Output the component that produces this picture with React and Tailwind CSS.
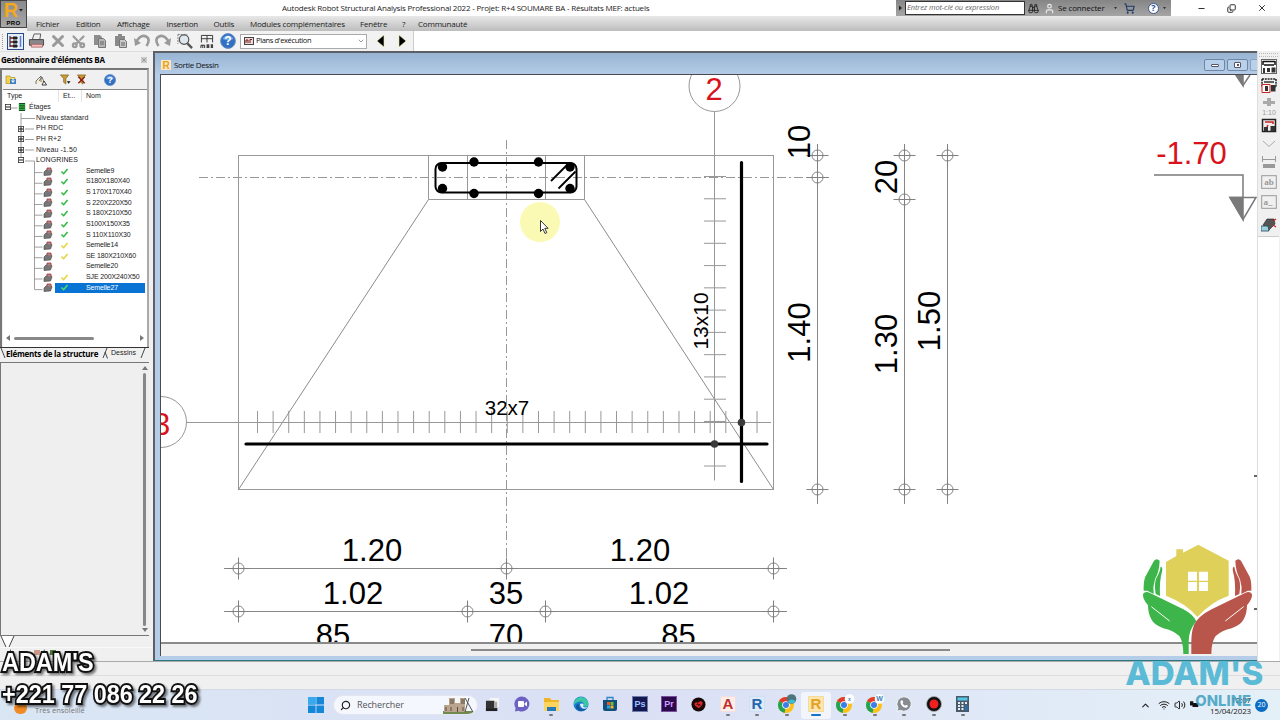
import React from 'react';
import { Scissors, Undo, Redo, X, Minus, Copy, Search, ChevronDown, ChevronUp, Wifi, Volume2, User, ShoppingCart, Binoculars } from 'lucide-react';

const menus = [
  ['Fichier', 'w-[40px]'],
  ['Edition', 'w-[41px]'],
  ['Affichage', 'w-[49.5px]'],
  ['Insertion', 'w-[47px]'],
  ['Outils', 'w-[36.5px]'],
  ['Modules complémentaires', 'w-[110px]'],
  ['Fenêtre', 'w-[42px]'],
  ['?', 'w-[16px]'],
  ['Communauté', 'w-[50px]'],
];

const branches = [
  { nom: 'Niveau standard', signe: '' },
  { nom: 'PH RDC', signe: '+' },
  { nom: 'PH R+2', signe: '+' },
  { nom: 'Niveau -1.50', signe: '+' },
  { nom: 'LONGRINES', signe: '-' },
];

const semelles = [
  { nom: 'Semelle9', etat: 'vert' },
  { nom: 'S180X180X40', etat: 'vert' },
  { nom: 'S 170X170X40', etat: 'vert' },
  { nom: 'S 220X220X50', etat: 'vert' },
  { nom: 'S 180X210X50', etat: 'vert' },
  { nom: 'S100X150X35', etat: 'vert' },
  { nom: 'S 110X110X30', etat: 'vert' },
  { nom: 'Semelle14', etat: 'jaune' },
  { nom: 'SE 180X210X60', etat: 'jaune' },
  { nom: 'Semelle20', etat: '' },
  { nom: 'SJE 200X240X50', etat: 'jaune' },
  { nom: 'Semelle27', etat: 'vert', actif: true },
];

const Aide = ({ className }) => (
  <svg viewBox="0 0 16 16" className={className}>
    <circle cx="8" cy="8" r="7.400" fill="#2f6fc4" stroke="#6b8fbf" />
    <path d="M2.500 6a6 6 0 0 1 11 0q-5.500 2.500-11 0z" fill="#6fa5e6" />
    <text x="8" y="12.300" textAnchor="middle" fontSize="12" fontWeight="bold" fill="#fff" fontFamily="Liberation Sans, sans-serif">?</text>
  </svg>
);

const LogoR = ({ className }) => (
  <svg viewBox="0 0 10 10" className={className}>
    <rect width="10" height="10" fill="#fbe8c0" />
    <text x="5" y="8.700" textAnchor="middle" fontSize="10" fontWeight="bold" fill="#e8a020" fontFamily="Liberation Sans, sans-serif">R</text>
  </svg>
);

const Entete = () => (
  <header className="flex h-[31px] shrink-0">
    <div className="flex h-[28px] w-[27px] shrink-0 flex-col items-center border border-[#444] bg-gradient-to-b from-[#8a8a8a] to-[#a8a8a8]">
      <div className="flex h-[19px] items-center">
        <span className="text-[20px] leading-[19px] font-bold text-[#f5a81c] [font-family:'Liberation_Sans',sans-serif]">R</span>
        <svg viewBox="0 0 5 3" className="ml-px w-[4px]"><path d="M0 0h5L2.500 3z" fill="#222" /></svg>
      </div>
      <span className="text-[6px] leading-[7px] font-bold tracking-[0.3px] text-black [font-family:'Liberation_Sans',sans-serif]">PRO</span>
    </div>
    <div className="flex flex-1 flex-col">
      <div className="flex h-[16px] items-center bg-white">
        <span className="ml-[255px] w-[614px] text-[8px] tracking-[-0.2px] whitespace-nowrap text-[#222]">
          Autodesk Robot Structural Analysis Professional 2022 - Projet: R+4 SOUMARE BA - Résultats MEF: actuels
        </span>
        <div className="flex h-[16px] w-[275px] items-center bg-gradient-to-b from-[#858585] to-[#a5a5a5]">
          <svg viewBox="0 0 9 8" className="w-[9px]"><path d="M3 1.500l3 2.500-3 2.500z" fill="#222" /></svg>
          <div className="flex h-[14px] w-[120px] items-center border border-[#333] bg-white pl-[1px] text-[7.5px] tracking-[-0.1px] whitespace-nowrap text-[#666] italic">Entrez mot-clé ou expression</div>
          <Binoculars className="ml-[3px] h-[11px] w-[11px] text-[#222]" strokeWidth={2} />
          <User className="ml-[5px] h-[11px] w-[11px] text-[#eee]" strokeWidth={2.500} />
          <span className="ml-[3px] w-[56px] text-[8px] tracking-[-0.15px] whitespace-nowrap text-[#111]">Se connecter</span>
          <svg viewBox="0 0 4 3" className="w-[3px]"><path d="M0 0h4L2 3z" fill="#333" /></svg>
          <ShoppingCart className="ml-[7px] h-[11px] w-[11px] text-[#223a66]" strokeWidth={2.500} />
          <div className="ml-[13px] flex h-[11px] w-[11px] items-center justify-center rounded-full border border-[#3b5b94] bg-white text-[9px] font-bold text-[#2b4f92]">?</div>
          <svg viewBox="0 0 4 3" className="ml-[4px] w-[3px]"><path d="M0 0h4L2 3z" fill="#333" /></svg>
        </div>
        <div className="flex flex-1 items-center pl-[26px] text-[#222]">
          <Minus className="h-[9px] w-[9px]" strokeWidth={2.500} />
          <Copy className="ml-[21px] h-[9px] w-[9px] -scale-x-100 rotate-180" strokeWidth={2.500} />
          <X className="ml-[21px] h-[10px] w-[10px]" strokeWidth={2.200} />
        </div>
      </div>
      <nav className="flex h-[15px] items-center bg-gradient-to-b from-[#e8e8e8] to-[#bdbdbd] pl-[9px] text-[8px] tracking-[-0.2px] text-[#222]">
        {menus.map(([nom, largeur]) => (
          <span key={nom} className={`${largeur} shrink-0 whitespace-nowrap`}>{nom}</span>
        ))}
      </nav>
    </div>
  </header>
);

const BarreOutils = () => (
  <div className="flex h-[20px] shrink-0 bg-white">
    <div className="flex w-[414px] items-center border-r border-[#ccc] bg-[#f2f2f2] pl-[2px]">
      <div className="h-[15px] w-[2px] border-l border-dotted border-[#999]" />
      <svg viewBox="0 0 17 17" className="ml-[3px] h-[17px] w-[17px]">
        <rect x="0.500" y="0.500" width="16" height="16" fill="#e4eefb" stroke="#2a4a86" />
        <path d="M3 3v11M3 5h8M3 9h8M3 13h8" stroke="#111" fill="none" />
        <path d="M6 3.500h4v3H6zM6 7.500h4v3H6zM6 11.500h4v3H6z" fill="#222" />
        <path d="M4 5h2M4 9h2M4 13h2" stroke="#d00" />
        <path d="M13.500 3v11" stroke="#5b7fd0" strokeWidth="1.500" />
      </svg>
      <svg viewBox="0 0 17 17" className="ml-[4px] h-[16px] w-[17px]">
        <path d="M4 7l2-6h7l-1 6z" fill="#eee" stroke="#555" />
        <path d="M1 7h15v6H1z" fill="#888" stroke="#444" />
        <path d="M3 12h12v3H3z" fill="#f3c0c0" stroke="#a55" strokeWidth="0.800" />
      </svg>
      <div className="ml-[4px] flex items-center text-[#9a9a9a]">
        <X className="h-[18px] w-[18px]" strokeWidth={4} />
        <Scissors className="ml-[4px] h-[15px] w-[15px] -rotate-90" strokeWidth={3.500} />
        <svg viewBox="0 0 14 14" className="ml-[7px] h-[14px] w-[14px]">
          <path d="M1 1h6l2 2v8H1z" fill="#8e8e8e" />
          <path d="M5.500 4.500h5l2 2v7h-7z" fill="#b5b5b5" stroke="#777" />
          <path d="M7 8h4M7 10h4" stroke="#666" />
        </svg>
        <svg viewBox="0 0 14 14" className="ml-[7px] h-[14px] w-[14px]">
          <path d="M1 2h10v10H1zM4 0h4v3H4z" fill="#8a8a8a" />
          <path d="M5.500 5.500h5l2 2v6h-7z" fill="#c8c8c8" stroke="#777" />
          <path d="M7 9h4M7 11h4" stroke="#666" />
        </svg>
        <svg viewBox="0 0 16 16" className="ml-[6px] h-[16px] w-[16px]">
          <path d="M2 9Q7 1 12 3.500T12.500 13" fill="none" stroke="#9a9a9a" strokeWidth="2.600" />
          <path d="M0 5l1 8 6-3z" fill="#9a9a9a" />
        </svg>
        <svg viewBox="0 0 16 16" className="ml-[5px] h-[16px] w-[16px] -scale-x-100">
          <path d="M2 9Q7 1 12 3.500T12.500 13" fill="none" stroke="#9a9a9a" strokeWidth="2.600" />
          <path d="M0 5l1 8 6-3z" fill="#9a9a9a" />
        </svg>
      </div>
      <svg viewBox="0 0 17 17" className="ml-[6px] h-[16px] w-[16px]">
        <path d="M1 1.500h10M1 1.500v10" stroke="#777" strokeDasharray="2 1" />
        <circle cx="7.500" cy="7" r="5" fill="#dfe8ef" stroke="#555" strokeWidth="1.300" />
        <path d="M11 11l5 5" stroke="#555" strokeWidth="2.500" />
      </svg>
      <svg viewBox="0 0 15 16" className="ml-[7px] h-[15px] w-[14px]">
        <path d="M1.500 9V1.500h12V9M1.500 5h12M7.500 1.500V9" stroke="#333" fill="none" />
        <path d="M1 15v-3h4v3M3 12v3" stroke="#222" fill="none" />
        <path d="M7 11h3v4H7zM11.500 11H14v4h-2.500z" fill="#444" />
      </svg>
      <Aide className="ml-[6px] h-[16px] w-[16px]" />
      <div className="ml-[4px] flex h-[15px] w-[127px] items-center border border-[#aaa] bg-white pl-[3px]">
        <svg viewBox="0 0 10 8" className="h-[8px] w-[10px]">
          <rect x="0.500" y="0.500" width="9" height="7" fill="#eed8d8" stroke="#444" />
          <path d="M2 6V3h2v3M6 6V2.500h2" stroke="#7a1a1a" fill="none" />
        </svg>
        <span className="ml-[2px] flex-1 text-[7.5px] tracking-[-0.35px] whitespace-nowrap text-[#111]">Plans d'exécution</span>
        <ChevronDown className="mr-[1px] h-[8px] w-[8px] text-[#666]" />
      </div>
      <svg viewBox="0 0 30 12" className="ml-[10px] h-[12px] w-[30px]">
        <path d="M7 0v12L0 6z" fill="#000" stroke="#e8ef9a" strokeWidth="0.600" />
        <path d="M22 0l7 6-7 6z" fill="#000" stroke="#e8ef9a" strokeWidth="0.600" />
      </svg>
    </div>
  </div>
);

const Coche = ({ etat, actif }) => (
  <svg viewBox="0 0 9 8" className="h-[7px] w-[9px]">
    {etat && <path d="M1 4l2.500 2.500L8 1.200" fill="none" stroke={etat === 'jaune' ? '#e3d43c' : actif ? '#4be06a' : '#2dbb40'} strokeWidth="1.800" />}
  </svg>
);

const IconeSemelle = () => (
  <svg viewBox="0 0 10 9" className="h-[9px] w-[10px]">
    <path d="M1 5l2-2 5-.5 1 1.500-1.500 4L1 8.500z" fill="#777" stroke="#444" strokeWidth="0.600" />
    <path d="M4 3V1h4v3" fill="#a88" stroke="#a33" strokeWidth="0.800" />
  </svg>
);

const Arbre = () => (
  <div className="relative mr-[2px] -ml-[3px] h-[230px] shrink-0 text-[7px] leading-[10.64px] text-[#222] [font-family:'Liberation_Sans',sans-serif]">
    <svg viewBox="0 0 146 230" className="absolute top-0 left-0 h-[230px] w-[146px]">
      <path d="M9.500 6h8M21 11v49M21 16.500h14M25 27h9M25 37.500h9M25 48h9M25 59h9.500M34.500 59v128.500" stroke="#888" fill="none" strokeWidth="0.800" />
      {semelles.map((s, i) => (
        <path key={s.nom} d={`M34.500 ${70.600 + i * 10.640}h8`} stroke="#888" strokeWidth="0.800" />
      ))}
    </svg>
    <div className="relative">
      <div className="flex h-[10.64px] items-center">
        <svg viewBox="0 0 6 6" className="ml-[5px] h-[6px] w-[6px]">
          <rect x="0.400" y="0.400" width="5.200" height="5.200" fill="#fff" stroke="#333" strokeWidth="0.800" />
          <path d="M1 3h4" stroke="#000" strokeWidth="0.900" />
        </svg>
        <svg viewBox="0 0 9 9" className="ml-[7px] h-[8px] w-[8px]">
          <path d="M1 0h7v9H1z" fill="#164a20" />
          <path d="M1 2h7M1 4.500h7M1 7h7" stroke="#3fd24d" strokeWidth="1.200" />
        </svg>
        <span className="ml-[3px]">Étages</span>
      </div>
      {branches.map((b) => (
        <div key={b.nom} className="flex h-[10.64px] items-center">
          <span className="ml-[18px] flex w-[18px]">
            {b.signe && (
              <svg viewBox="0 0 6 6" className="h-[6px] w-[6px]">
                <rect x="0.400" y="0.400" width="5.200" height="5.200" fill="#fff" stroke="#333" strokeWidth="0.800" />
                <path d={b.signe === '+' ? 'M1 3h4M3 1v4' : 'M1 3h4'} stroke="#000" strokeWidth="0.900" />
              </svg>
            )}
          </span>
          <span className="tracking-[0.1px] whitespace-nowrap">{b.nom}</span>
        </div>
      ))}
      {semelles.map((s) => (
        <div key={s.nom} className="flex h-[10.64px] items-center">
          <span className="ml-[43px] w-[12px]"><IconeSemelle /></span>
          <span className={`flex h-full flex-1 items-center pl-[5px] ${s.actif ? 'bg-[#0a74d4] text-white' : ''}`}>
            <Coche etat={s.etat} actif={s.actif} />
            <span className="ml-[17px] tracking-[-0.13px] whitespace-nowrap">{s.nom}</span>
          </span>
        </div>
      ))}
    </div>
  </div>
);

const Gestionnaire = () => (
  <aside className="flex w-[153px] shrink-0 flex-col bg-[#f0f0f0]">
    <div className="flex h-[17px] items-center border-t border-[#ddd] pl-px">
      <span className="w-[140px] text-[8px] font-bold tracking-[-0.28px] whitespace-nowrap text-black">Gestionnaire d'éléments BA</span>
      <span className="flex h-[6px] w-[6px] items-center justify-center bg-[#ccc]"><X className="h-[6px] w-[6px] text-[#666]" /></span>
    </div>
    <div className="flex h-[279px] w-[149px] flex-col border-x-2 border-t-2 border-[#777] border-r-[#aaa] pl-px">
      <div className="flex h-[19px] shrink-0 items-center bg-[#f0f0f0] pl-[2px]">
        <svg viewBox="0 0 12 11" className="h-[11px] w-[12px]">
          <path d="M1 2h4l1 1.500h4v6H1z" fill="#f3d24a" stroke="#9c8420" strokeWidth="0.600" />
          <path d="M5 5h6v5H5z" fill="#3e7fc4" />
          <path d="M8 4v4M6.500 6.500L8 8.500l1.500-2" stroke="#fff" fill="none" />
        </svg>
        <svg viewBox="0 0 12 12" className="ml-[18px] h-[12px] w-[12px]">
          <path d="M1 10V7l5-5v6M4 7l3-4 2 5" fill="#f5efd0" stroke="#555" strokeWidth="0.800" />
          <path d="M7 11l2-4 2.500 4z" fill="#fff" stroke="#111" strokeWidth="0.800" />
        </svg>
        <svg viewBox="0 0 12 12" className="ml-[12px] h-[11px] w-[12px]">
          <path d="M1 1h9L7 5v6L4.500 9V5z" fill="#c79b33" stroke="#7c5a16" strokeWidth="0.700" />
          <path d="M8 8h4l-2 2.500z" fill="#111" />
        </svg>
        <svg viewBox="0 0 12 12" className="ml-[5px] h-[11px] w-[12px]">
          <path d="M1 1h9L7 5v6L4.500 9V5z" fill="#c79b33" stroke="#7c5a16" strokeWidth="0.700" />
          <path d="M2 3l7 7M9 3l-7 7" stroke="#8f1d14" strokeWidth="1.500" />
        </svg>
        <Aide className="ml-[16px] h-[12px] w-[12px]" />
      </div>
      <div className="flex h-[13px] shrink-0 items-center border-t border-[#888] bg-white text-[7px] text-[#222] [font-family:'Liberation_Sans',sans-serif]">
        <span className="ml-[4px] w-[51px]">Type</span>
        <span className="flex h-full w-[23px] items-center border-l border-[#e2e2e2] pl-[4px]">Et...</span>
        <span className="flex h-full items-center border-l border-[#e2e2e2] pl-[4px]">Nom</span>
      </div>
      <div className="flex flex-1 flex-col justify-between bg-white pb-[4px]">
        <Arbre />
        <div className="flex h-[10px] items-center px-[3px]">
          <svg viewBox="0 0 4 6" className="h-[6px] w-[4px]"><path d="M4 0v6L0 3z" fill="#777" /></svg>
          <div className="ml-[4px] h-[3px] w-[80px] rounded-full bg-[#888]" />
          <svg viewBox="0 0 4 6" className="ml-auto h-[6px] w-[4px]"><path d="M0 0v6l4-3z" fill="#777" /></svg>
        </div>
      </div>
    </div>
    <div className="flex h-[12px] w-[149px] items-center border-t border-[#333] whitespace-nowrap">
      <svg viewBox="0 0 6 11" className="h-[11px] w-[6px]"><path d="M1 0l4 10" stroke="#333" fill="none" strokeWidth="0.900" /></svg>
      <span className="w-[96px] text-[8px] font-bold tracking-[-0.23px] text-black">Eléments de la structure</span>
      <svg viewBox="0 0 6 11" className="h-[11px] w-[6px]"><path d="M5 0L1 10M3 4l2.500 6.500" stroke="#333" fill="none" strokeWidth="0.900" /></svg>
      <span className="ml-[3px] text-[7px] text-[#222] [font-family:'Liberation_Sans',sans-serif]">Dessins</span>
      <svg viewBox="0 0 6 11" className="ml-[4px] h-[11px] w-[6px]"><path d="M5 0L1 10" stroke="#333" fill="none" strokeWidth="0.900" /></svg>
    </div>
    <div className="mt-[3px] flex h-[274px] w-[149px] justify-end border-y border-l border-[#777] bg-[#efefef]">
      <div className="flex w-[9px] flex-col items-center justify-between py-[3px]">
        <svg viewBox="0 0 6 4" className="w-[6px]"><path d="M0 4h6L3 0z" fill="#777" /></svg>
        <div className="h-[253px] w-[3px] rounded-full bg-[#888]" />
        <svg viewBox="0 0 6 4" className="w-[6px]"><path d="M0 0h6L3 4z" fill="#777" /></svg>
      </div>
    </div>
    <svg viewBox="0 0 153 25" className="h-[25px] w-[153px]">
      <path d="M1 0l5 11h3l5-11z" fill="#fff" />
      <path d="M1 0l5 11M9 11l5-11" fill="none" stroke="#333" strokeWidth="0.900" />
      <path d="M0 11.500h152" stroke="#fafafa" />
      <path d="M34 14h6v5h-6z" fill="#c98" />
      <path d="M50 14h6v5h-6z" fill="#4c7a3c" />
    </svg>
  </aside>
);

// Repère de cote : croix et cercle
const Repere = ({ x, y }) => (
  <g>
    <circle cx={x} cy={y} r="5.500" />
    <path d={`M${x - 11} ${y}h22M${x} ${y - 11}v22`} />
  </g>
);

const barres = [[442.500, 167], [442.500, 188.500], [474, 162], [538.500, 162], [570, 167], [570, 188.500], [474, 193.500], [538.500, 193.500]];
const cotesH = [[372, 560.500, '1.20'], [640, 560.500, '1.20'], [353, 603.500, '1.02'], [506, 603.500, '35'], [659, 603.500, '1.02'], [333, 646, '85'], [506, 646, '70'], [678.500, 646, '85']];
const cotesV = [[810, 142, '10'], [810, 332.500, '1.40'], [897, 177, '20'], [897, 344, '1.30'], [940, 321, '1.50']];

const Plan = () => (
  <svg viewBox="161 75 1096 567" className="h-[567px] w-[1096px] bg-white [font-family:'Liberation_Sans',sans-serif]">
    <circle cx="540" cy="222" r="20" fill="#fbfab4" />
    <g fill="none" stroke="#989898" strokeWidth="1">
      <rect x="238.500" y="155.500" width="535" height="334" />
      <path d="M428.500 155v44.500h156V155M467.500 155v44M545.500 155v44" />
      <path d="M428.500 199.500L238.500 489.500M584.500 199.500L773.500 489.500" stroke="#8c8c8c" />
      <path d="M199 177.500h630M506.500 140v428" strokeDasharray="9 3 2 3" />
      <circle cx="714.500" cy="86" r="25.500" />
      <circle cx="161" cy="422" r="25.500" />
      <path d="M714.500 111.500v369M186.500 422.500H771" />
      {Array.from({ length: 33 }, (_, i) => (
        <path key={i} d={`M${257.500 + i * 15.610} 411v22`} />
      ))}
      {Array.from({ length: 14 }, (_, i) => (
        <path key={i} d={`M704 ${176.500 + i * 22.270}h22`} />
      ))}
      <path d="M817.500 144v360M904.500 144v360M947.500 144v360M224 568.500h563M224 611.500h563" stroke="#888" />
      <g stroke="#808080">
        {[155.500, 177.500, 489.500].map((y) => <Repere key={y} x={817.500} y={y} />)}
        {[155.500, 199.500, 489.500].map((y) => <Repere key={y} x={904.500} y={y} />)}
        {[155.500, 489.500].map((y) => <Repere key={y} x={947.500} y={y} />)}
        {[238.500, 506.500, 773.500].map((x) => <Repere key={x} x={x} y={568.500} />)}
        {[238.500, 467.500, 545.500, 773.500].map((x) => <Repere key={x} x={x} y={611.500} />)}
      </g>
    </g>
    <g fill="none" stroke="#000">
      <rect x="435.500" y="163" width="141" height="29.500" rx="6" strokeWidth="2" />
      <path d="M551 181l17-17M558.500 188.500l17-17" strokeWidth="1.800" />
      <path d="M741.500 162.500v319M246 444h521" strokeWidth="3.200" strokeLinecap="round" />
    </g>
    {barres.map(([x, y]) => <circle key={`${x}-${y}`} cx={x} cy={y} r="4.700" />)}
    <circle cx="741.500" cy="422.500" r="3.800" fill="#3a3a3a" />
    <circle cx="714.500" cy="444" r="3.800" fill="#3a3a3a" />
    <g fontSize="31" textAnchor="middle" fill="#000">
      {cotesH.map(([x, y, t]) => <text key={`${x}-${y}`} x={x} y={y}>{t}</text>)}
      {cotesV.map(([x, y, t]) => <text key={`${x}-${y}`} transform={`translate(${x} ${y}) rotate(-90)`}>{t}</text>)}
      <text x="507" y="415" fontSize="20.500">32x7</text>
      <text transform="translate(707.500 321) rotate(-90)" fontSize="21">13x10</text>
    </g>
    <g fontSize="31" textAnchor="middle" fill="#d8131b">
      <text x="714" y="99.500">2</text>
      <text x="161.500" y="435">3</text>
      <text x="1191.500" y="163.500">-1.70</text>
    </g>
    <g stroke="#7a7a7a" fill="none" strokeWidth="1.500">
      <path d="M1154 175h89v22M1230 197.500h26l-13 22z" />
      <path d="M1230 197.500h13v22z" fill="#7a7a7a" />
      <path d="M1236 75l7 10.500L1250 75" />
      <path d="M1236 75l7 10.500V75z" fill="#7a7a7a" />
      <path d="M1254 476h3M1254 609h3" stroke="#333" />
    </g>
    <path d="M540.500 220.500v11l2.500-2.500 2 4.500 1.800-.9-2-4.300h3.300z" fill="#fff" stroke="#222" strokeWidth="0.900" />
  </svg>
);

const FenetreDessin = () => (
  <section className="flex w-[1104px] shrink-0 flex-col border-t-2 border-b border-l-2 border-[#5c6066] border-b-[#2a7a86] bg-[#b5cde8]">
    <div className="flex h-[21px] shrink-0 items-center bg-gradient-to-b from-[#98b4d3] to-[#b3cbe6] pt-[3px] pl-[6px]">
      <LogoR className="h-[10px] w-[10px]" />
      <span className="ml-[3px] flex-1 text-[8px] leading-[12px] tracking-[-0.32px] text-[#111]">Sortie Dessin</span>
      <div className="flex h-[12px] w-[21px] items-center justify-center rounded-[2px] border border-[#6f87a6] bg-[#b9d0ea]">
        <i className="h-[3px] w-[8px] rounded-[1px] border border-[#556] bg-white" />
      </div>
      <div className="ml-[2px] flex h-[12px] w-[21px] items-center justify-center rounded-[2px] border border-[#6f87a6] bg-[#b9d0ea]">
        <i className="flex h-[6px] w-[7px] items-center justify-center rounded-[1px] border border-[#556] bg-white"><b className="h-[2px] w-[2px] bg-[#556]" /></i>
      </div>
      <div className="ml-[2px] h-[12px] w-[7px] rounded-l-[2px] border border-r-0 border-[#8aa2c0] bg-[#b9d0ea]" />
    </div>
    <div className="ml-[5px] flex h-[582px] flex-col border-t border-l border-[#4a4a52] bg-[#f0f0f0]">
      <Plan />
      <div className="h-[2px] bg-[#8a8a8a]" />
      <div className="flex-1 pt-[5px]">
        <div className="ml-[310px] h-[1.5px] w-[479px] bg-[#8a8a8a]" />
      </div>
    </div>
  </section>
);

const OutilsDroite = () => (
  <aside className="flex w-[22px] flex-col border-l border-[#ddd] bg-white">
    <div className="flex h-[186px] flex-col items-center border-b border-[#ccc] bg-[#f0f0f0]">
      <div className="mt-[2px] h-[4px] w-[19px] border-y border-dotted border-[#bbb]" />
      <svg viewBox="0 0 16 176" className="h-[176px] w-[16px]">
        <rect x="0.500" y="2.500" width="15" height="14" fill="#fff" stroke="#666" />
        <path d="M2 4.500h12M2 4v4M14 4v4M3 8h10" stroke="#111" strokeWidth="1.500" fill="none" />
        <path d="M2 11h2v5H2zM6 11h3v4H6zM10.500 10.500h4v5h-4z" fill="#333" />
        <path d="M1 22h14v8H1z" fill="none" stroke="#222" strokeWidth="1.500" strokeDasharray="2 0.800" />
        <path d="M3 25h10" stroke="#333" strokeWidth="1.500" />
        <path d="M1 27.500h8v8H1z" fill="#fff" stroke="#d02020" />
        <path d="M4 29h3v5H4zM10 28h4.500v6.500H10z" fill="#333" />
        <path d="M2 44h12v3H2zM6 41h4v8H6z" fill="#aaa" />
        <text x="8" y="58" textAnchor="middle" fontSize="7" fill="#999" fontFamily="Liberation Sans, sans-serif">1:10</text>
        <path d="M1.500 62.500h13v12h-13z" fill="#eee" stroke="#222" strokeWidth="1.500" />
        <path d="M4 65h8v2M7 68l-3 6" stroke="#d02020" fill="none" strokeWidth="1.500" />
        <path d="M3 70h4v4H3zM9.500 69h4.500v5H9.500z" fill="#333" />
        <path d="M2 84l6 5.500 6-5.500" stroke="#aaa" fill="none" />
        <path d="M1 102.500h14M1.500 99v6M14.500 99v6" stroke="#999" />
        <path d="M2 107h12v4H2z" fill="#999" />
        <rect x="0.700" y="118.700" width="14.600" height="12.600" fill="none" stroke="#999" />
        <text x="8" y="128" textAnchor="middle" fontSize="9" fontWeight="bold" fill="#999" fontFamily="Liberation Serif, serif">ab</text>
        <rect x="0.700" y="138.700" width="14.600" height="12.600" fill="none" stroke="#999" />
        <text x="7" y="148" textAnchor="middle" fontSize="9" fontWeight="bold" fill="#999" fontFamily="Liberation Serif, serif">a_</text>
        <path d="M2 168l4-6h7l1 5-6 6z" fill="#555" stroke="#222" strokeWidth="0.600" />
        <path d="M0 169h7l1 5H0z" fill="#9fd0e0" stroke="#245" strokeWidth="0.800" />
        <path d="M12 164l3-2M12 168l3 2" stroke="#d02020" strokeWidth="1.200" />
      </svg>
    </div>
  </aside>
);

const Chrome = ({ badge }) => (
  <svg viewBox="0 0 20 20" className="h-[20px] w-[20px]">
    <circle cx="9" cy="11" r="8" fill="#fbc116" />
    <path d="M9 11L2.100 7a8 8 0 0 1 13.800 0z" fill="#e33b2e" />
    <path d="M9 11L2.100 7a8 8 0 0 0 5.500 11.900z" fill="#23a455" />
    <circle cx="9" cy="11" r="3.800" fill="#fff" />
    <circle cx="9" cy="11" r="3" fill="#3b7ded" />
    <circle cx="14.500" cy="5" r="4.800" fill={badge === 'photo' ? '#4d7580' : '#fff'} />
    {badge === 'photo' ? (
      <path d="M11 7a4 4 0 0 0 7.500 0q-4-3-7.500 0z" fill="#38bfd0" />
    ) : (
      <text x="14.500" y="7.200" textAnchor="middle" fontSize={badge === 'W' ? 7 : 5} fontWeight="bold" fill="#3a7fb8" fontFamily="Liberation Sans, sans-serif">{badge}</text>
    )}
  </svg>
);

const Tuile = ({ texte, fond, couleur, bord, taille = 9 }) => (
  <svg viewBox="0 0 16 16" className="h-[16px] w-[16px]">
    <rect x="0.500" y="0.500" width="15" height="15" fill={fond} stroke={bord} />
    <text x="8" y={taille > 10 ? 13.300 : 11.200} textAnchor="middle" fontSize={taille} fontWeight="bold" fill={couleur} fontFamily="Liberation Sans, sans-serif">{texte}</text>
  </svg>
);

const applis = [
  { id: 'vues', icone: <svg viewBox="0 0 16 16" className="w-[15px]"><path d="M5 1h10v10H5z" fill="#f5f5f5" /><path d="M1 4h9v8H1z" fill="#333" /><path d="M1 12h12V8h0v7H1z" fill="#222" /><path d="M10 5h3v7h-3z" fill="#aaa" /><path d="M1 12h12v3H1z" fill="#222" /></svg> },
  { id: 'teams', icone: <svg viewBox="0 0 16 16" className="w-[16px]"><path d="M8 .5a7.500 7.500 0 1 1-3.500 14.200L1 15.500l.6-3.500A7.500 7.500 0 0 1 8 .5z" fill="#6b62c2" /><rect x="4" y="5" width="6" height="6" rx="1" fill="#fff" /><path d="M10.500 7.500L13 5.500v5l-2.500-2z" fill="#fff" /></svg> },
  { id: 'dossier', actif: true, icone: <svg viewBox="0 0 17 15" className="w-[17px]"><path d="M1 1h6l1.500 2H16v11H1z" fill="#f0b429" /><path d="M1 5h15v9H1z" fill="#fcd35c" /><path d="M4 10h9v4H4z" fill="#2379be" /></svg> },
  { id: 'edge', icone: <svg viewBox="0 0 16 16" className="w-[16px]"><circle cx="8" cy="8" r="7.500" fill="#1a7fd0" /><path d="M1 7a7.300 7.300 0 0 1 14.500 1c0 3-4 3.500-5.500 2 2-3-1-5-3.500-4.500S2 7 1 9z" fill="#3cc7a4" /><path d="M6 7.500c-1 3 1 6 5 5.500l3-1.500c-3 5-9 4-10.500 1S4 8 6 7.500z" fill="#1456a0" /><path d="M7 8.500a2 2 0 0 1 3.500 0q0 1.500-.5 2 1.500 1.500 4.500.5l-1.500 1.500q-5 1-6-4z" fill="#e6eef8" /></svg> },
  { id: 'store', icone: <svg viewBox="0 0 16 16" className="w-[16px]"><path d="M5 4V1.500h6V4" stroke="#2a86c8" fill="none" strokeWidth="1.300" /><path d="M1 4h14v9q0 2-2 2H3q-2 0-2-2z" fill="#12507c" /><path d="M5 6h3v3H5z" fill="#e8572c" /><path d="M8.500 6h3v3h-3z" fill="#7cbb2d" /><path d="M5 9.500h3v3H5z" fill="#2aa3e0" /><path d="M8.500 9.500h3v3h-3z" fill="#f5b921" /></svg> },
  { id: 'ps', icone: <Tuile texte="Ps" fond="#141852" couleur="#9fc3ff" bord="#6f7ba8" /> },
  { id: 'pr', icone: <Tuile texte="Pr" fond="#2a0a4a" couleur="#d19cff" bord="#7b4f9c" /> },
  { id: 'coeur', icone: <svg viewBox="0 0 16 16" className="w-[15px]"><circle cx="8" cy="8" r="7.500" fill="#180808" /><path d="M3.500 7.500q1-3 4-1.500 3-3 5 0 0 3-4.500 6-4-2-4.500-4.500z" fill="#d8262c" /><path d="M6 8q1.500-2 2 1 2-2 2 0" stroke="#180808" fill="none" /></svg> },
  { id: 'autocad', actif: true, icone: <Tuile texte="A" fond="#faeeed" couleur="#c02f2a" bord="#f3dfdd" taille={15} /> },
  { id: 'revit', actif: true, icone: <Tuile texte="R" fond="#dfeaf8" couleur="#2465ae" bord="#d0e0f4" taille={15} /> },
  { id: 'chrome1', actif: true, icone: <Chrome badge="photo" /> },
  { id: 'robot', fond: true, icone: <Tuile texte="R" fond="#fbe6b0" couleur="#e8a020" bord="#f6dc9c" taille={15} /> },
  { id: 'chrome2', actif: true, icone: <Chrome badge="x" /> },
  { id: 'chrome3', actif: true, icone: <Chrome badge="W" /> },
  { id: 'whatsapp', actif: true, icone: <svg viewBox="0 0 16 16" className="w-[16px]"><path d="M8 .8a7.200 7.200 0 1 1-3.500 13.500L1 15.300l1-3.500A7.200 7.200 0 0 1 8 .8z" fill="#858b90" stroke="#fff" strokeWidth="0.800" /><path d="M5 4.500l1.500-.3.800 2-.8.900q1 2 2.600 2.600l1-.9 1.900 1q-.3 2-2.200 1.900Q5.500 11 4.500 7 4.200 5.300 5 4.500z" fill="#fff" /></svg> },
  { id: 'enreg', actif: true, icone: <svg viewBox="0 0 16 16" className="w-[16px]"><circle cx="8" cy="8" r="7.500" fill="#111" stroke="#aaa" strokeWidth="0.800" /><circle cx="8" cy="8" r="4.500" fill="#f02020" /></svg> },
  { id: 'calc', actif: true, icone: <svg viewBox="0 0 13 16" className="w-[13px]"><rect width="13" height="16" fill="#4b5a68" /><path d="M1.500 1.500h10v3h-10z" fill="#54c6e8" /><path d="M2 6h2v2H2zM5.500 6h2v2h-2zM9 6h2v2H9zM2 9h2v2H2zM5.500 9h2v2h-2zM2 12h2v2H2zM5.500 12h2v2h-2z" fill="#e6edf2" /><path d="M9 9h2.500v5.500H9z" fill="#2a6fb0" /></svg> },
];

const BarreTaches = () => (
  <footer className="flex h-[31px] shrink-0 items-center border-t border-[#d5d9e4] bg-gradient-to-r from-[#d9e6f4] via-[#dbe0f5] to-[#e4f0f8]">
    <div className="flex w-[308px] items-end self-end pb-[4px] pl-[14px]">
      <span className="mb-[2px] h-[12px] w-[13px] rounded-full bg-[#f08a24]" />
      <span className="ml-[8px] text-[7.5px] leading-[12px] text-[#777]">Très ensoleillé</span>
    </div>
    <svg viewBox="0 0 16 16" className="h-[16px] w-[16px]">
      <path d="M0 0h7.600v7.600H0zM8.400 0H16v7.600H8.400zM0 8.400h7.600V16H0zM8.400 8.400H16V16H8.400z" fill="#1487d8" />
      <path d="M0 0h7.600v7.600H0z" fill="#37a9ec" />
    </svg>
    <div className="ml-[9px] flex h-[20px] w-[145px] items-center overflow-hidden rounded-full border border-[#e3e6f0] bg-[#f4f7fd] pl-[6px]">
      <Search className="h-[11px] w-[11px] -scale-x-100 text-[#222]" strokeWidth={2.500} />
      <span className="ml-[6px] w-[86px] text-[9px] tracking-[-0.1px] text-[#555]">Rechercher</span>
      <svg viewBox="0 0 32 18" className="h-[18px] w-[32px]">
        <path d="M0 15h30v3H0z" fill="#6f8a4c" />
        <path d="M6 2h6v14H6zM17 2h5v14h-5zM11 7h8v9h-8zM1 9h6v7H1z" fill="#b9a48e" />
        <path d="M8 3v5M10 3v5M19 3v5M21 3v5M3 11v4M8 11v4M14.500 11v5M20 11v4" stroke="#5d4a3e" />
        <path d="M22 2l8 14M22 16l4-14" stroke="#555" />
      </svg>
    </div>
    <div className="flex">
      {applis.map((a) => (
        <div key={a.id} className={`flex h-[27px] w-[29.4px] flex-col items-center justify-center ${a.fond ? 'rounded-[3px] bg-[#f2f5fc]' : ''}`}>
          <div className="flex h-[20px] items-center">{a.icone}</div>
          <div className={`h-[2px] rounded-full ${a.fond ? 'w-[10px] bg-[#1a72c4]' : a.actif ? 'w-[4px] bg-[#777]' : 'w-[4px]'}`} />
        </div>
      ))}
    </div>
    <div className="flex flex-1 items-center justify-end pr-[12px] text-[#222]">
      <ChevronUp className="h-[11px] w-[11px]" strokeWidth={2.500} />
      <Wifi className="ml-[7px] h-[12px] w-[12px]" />
      <Volume2 className="ml-[4px] h-[12px] w-[12px]" />
      <svg viewBox="0 0 12 9" className="ml-[4px] h-[8px] w-[10px]"><path d="M0 0h4v2h6v5H3V5H0z" fill="#111" /></svg>
      <div className="ml-[5px] w-[46px] text-right text-[8px] leading-[11px] tracking-[-0.15px]">
        <div>12:07</div>
        <div>15/04/2023</div>
      </div>
      <div className="ml-[4px] flex h-[13px] w-[13px] items-center justify-center rounded-full bg-[#0a6cc4] text-[7px] text-white">20</div>
    </div>
  </footer>
);

const Filigrane = () => (
  <>
    <div className="absolute top-[646px] left-[2px] origin-left [font-family:'Liberation_Sans',sans-serif] text-[26.5px] leading-[32px] font-bold whitespace-nowrap text-white [-webkit-text-stroke:4px_#111] [paint-order:stroke_fill] drop-shadow-[2px_2px_1px_rgba(0,0,0,0.5)]">
      <div className="origin-left scale-x-[0.885]">ADAM'S</div>
      <div className="origin-left scale-x-[0.882]">+221 77 086 22 26</div>
    </div>
    <svg viewBox="0 0 450 570" className="absolute top-[530px] left-[1130px] h-[190px] w-[150px] overflow-visible">
      <path d="M108 96l31-18V58h20v10l46-24 91 48v105q-55 20-94 64-32-40-94-64z" fill="#dfd05a" />
      <path d="M174 125h27v27h-27zM207 125h27v27h-27zM174 156h27v27h-27zM207 156h27v27h-27z" fill="#fff" />
      {/* Main gauche */}
      <path d="M89 92Q80 83 72 92L46 140Q40 155 41 182L52 182 71 192Q68 170 75 148 88 125 89 92z" fill="#3db54a" />
      <path d="M92 110Q99 110 96 125 88 150 90 198L77 192Q70 155 84 135 90 125 92 110z" fill="#3db54a" />
      <path d="M39 192Q46 182 60 189L160 238Q190 254 199 274 176 300 176 335V372H160Q160 335 148 318 130 302 100 295 72 285 64 268 54 250 54 226 38 208 39 192z" fill="#3db54a" />
      <path d="M64 230l55 43" stroke="#fff" strokeWidth="3" />
      {/* Main droite */}
      <path d="M316 92Q325 83 333 92L359 140Q365 155 364 182L353 182 334 192Q337 170 330 148 317 125 316 92z" fill="#b9564b" />
      <path d="M313 110Q306 110 309 125 317 150 315 198L328 192Q335 155 321 135 315 125 313 110z" fill="#b9564b" />
      <path d="M366 192Q359 182 345 189L245 238Q205 258 192 285 184 305 184 335V372H244Q244 335 257 318 275 302 305 295 333 285 341 268 351 250 351 226 367 208 366 192z" fill="#b9564b" />
      <path d="M341 230l-55 43" stroke="#fff" strokeWidth="3" />
      <text x="-14" y="466" textLength="414" lengthAdjust="spacingAndGlyphs" fontSize="100" fontWeight="800" fill="#5bbad6" fontFamily="Inter, sans-serif">ADAM'S</text>
      <text x="196" y="528" textLength="167" lengthAdjust="spacingAndGlyphs" fontSize="44" fontWeight="800" fill="#3f9fc0" fillOpacity="0.850" fontFamily="Inter, sans-serif">ONLINE</text>
    </svg>
  </>
);

const App = () => {
  return (
    <div className="relative flex h-[720px] w-[1280px] flex-col overflow-hidden bg-[#f0f0f0] [font-family:'Open_Sans','Noto_Sans',sans-serif]">
      <Entete />
      <BarreOutils />
      <main className="flex h-[610px] shrink-0">
        <Gestionnaire />
        <FenetreDessin />
        <OutilsDroite />
      </main>
      {/* Barre d'état */}
      <div className="flex h-[28px] shrink-0 flex-col border-t border-[#aaa]">
        <div className="h-[14px] border-b border-[#ddd]" />
      </div>
      <BarreTaches />
      <Filigrane />
    </div>
  );
};

export default App;
